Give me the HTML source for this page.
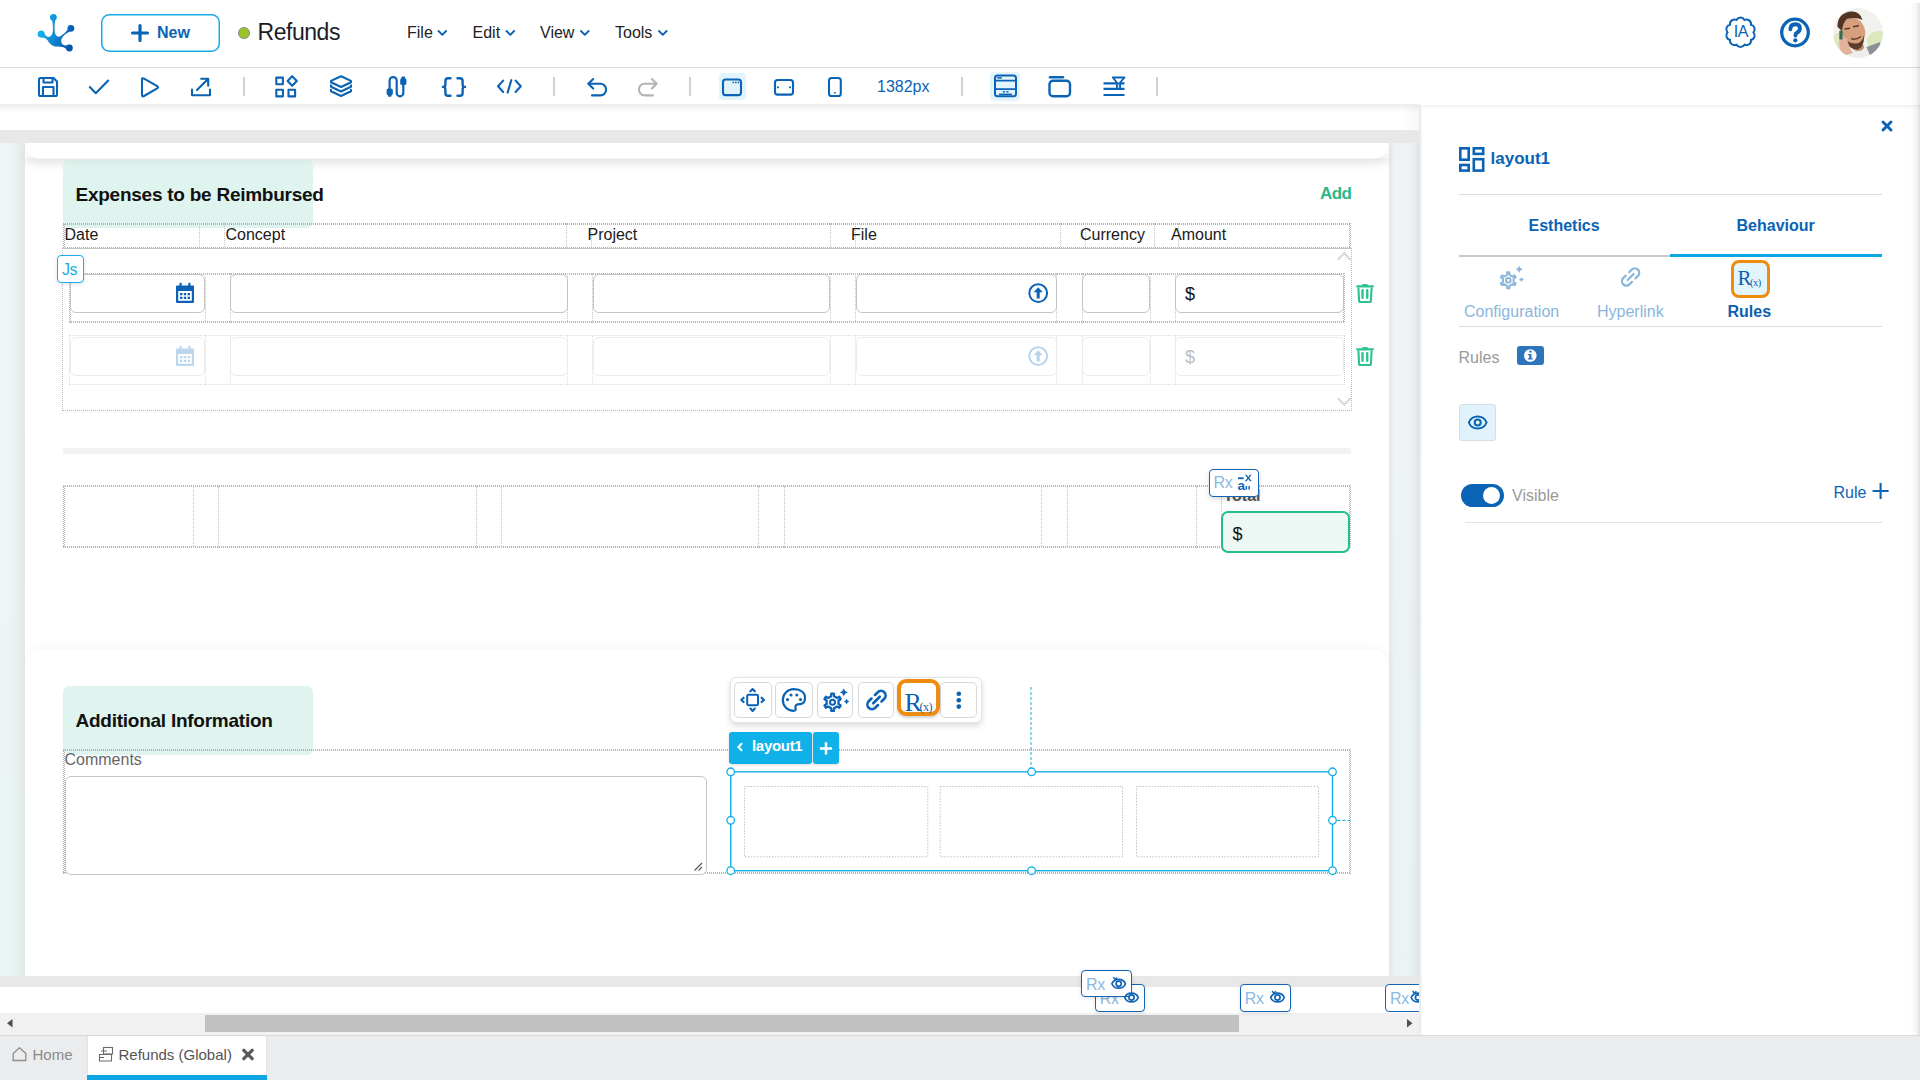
<!DOCTYPE html>
<html><head><meta charset="utf-8">
<style>
*{box-sizing:border-box;margin:0;padding:0}
html,body{width:1920px;height:1080px;overflow:hidden;background:#fff;font-family:"Liberation Sans",sans-serif;position:relative}
.a{position:absolute}
.t{position:absolute;line-height:1;white-space:nowrap}
svg{position:absolute;overflow:visible}
.blue{color:#0b63b5}
.dot{border:1px dotted #b9b9b9}
.dd{background:
 repeating-linear-gradient(90deg,#b4b4b4 0 1px,transparent 1px 2px) 0 0/100% 2px no-repeat,
 repeating-linear-gradient(90deg,#b4b4b4 0 1px,transparent 1px 2px) 0 100%/100% 2px no-repeat,
 repeating-linear-gradient(180deg,#b4b4b4 0 1px,transparent 1px 2px) 0 0/1px 100% no-repeat,
 repeating-linear-gradient(180deg,transparent 0 1px,#b4b4b4 1px 2px) 1px 0/1px 100% no-repeat,
 repeating-linear-gradient(180deg,#b4b4b4 0 1px,transparent 1px 2px) 100% 0/1px 100% no-repeat,
 repeating-linear-gradient(180deg,transparent 0 1px,#b4b4b4 1px 2px) calc(100% - 1px) 0/1px 100% no-repeat}

.inp{position:absolute;border:1px solid #c4c4c4;border-radius:6px;background:#fff}
.inp2{position:absolute;border:1px solid #ececec;border-radius:6px;background:#fff}
</style></head><body>

<!-- ================= HEADER ================= -->
<div class="a" style="left:0;top:67px;width:1920px;height:1px;background:#d9d9d9"></div>
<svg style="left:0;top:0" width="1920" height="67">
  <defs>
    <linearGradient id="lg" x1="39" y1="30" x2="72" y2="40" gradientUnits="userSpaceOnUse">
      <stop offset="0" stop-color="#18b4f0"/><stop offset="0.5" stop-color="#0a85d2"/><stop offset="1" stop-color="#0a52a6"/>
    </linearGradient>
  </defs>
  <g fill="url(#lg)">
    <circle cx="53.35" cy="17.3" r="3.4"/>
    <circle cx="41.1" cy="34" r="3.5"/>
    <circle cx="70.9" cy="28.3" r="3.4"/>
    <circle cx="69.4" cy="48" r="3.4"/>
    <path d="M51.9,19.5 C52.8,23 53.2,27 52.9,31 C52.6,34.5 50.8,36.9 48.3,36.9 C46.3,36.9 44.6,35 43.6,31.6 L41.5,37.4 C44.5,37.2 46.2,38.5 47.4,40.1 C49,42.6 51,45.6 55.2,46.6 C58,47.1 62,46.4 65,47.9 L67.4,50.2 L69.2,44.6 C66.5,45.9 64,45.8 62.3,44 C60.6,42 60.9,39 62.6,37 C64.2,35 66.6,33.3 69.8,31.6 L68.4,28.6 C66,32.2 63,34.8 60.5,36.2 C58.5,37.2 56.5,36.6 55.5,34.5 C54.6,32 54.3,28 54.6,25 C54.8,23 55.2,21.5 55.2,19.5 Z"/>
  </g>
  <!-- New button -->
  <rect x="101.75" y="14.75" width="117.5" height="36.5" rx="7.5" fill="#fff" stroke="#19a9e6" stroke-width="1.5"/>
  <path d="M140,25.5 V40.5 M132.5,33 H147.5" stroke="#0b63b5" stroke-width="3.2" stroke-linecap="round"/>
  <!-- status dot -->
  <circle cx="244" cy="33" r="5.6" fill="#9bc12d" stroke="#8a8a8a" stroke-width="0.9"/>
  <!-- chevrons -->
  <g stroke="#0b63b5" stroke-width="1.9" fill="none" stroke-linecap="round" stroke-linejoin="round">
    <path d="M438.5,31 L442.3,34.8 L446.1,31"/>
    <path d="M506.5,31 L510.3,34.8 L514.1,31"/>
    <path d="M581,31 L584.8,34.8 L588.6,31"/>
    <path d="M659,31 L662.8,34.8 L666.6,31"/>
  </g>
  <!-- IA icon -->
  <path d="M1744.5,19.9 A4.6,4.6 0 0 1 1751.0,24.7 A4.6,4.6 0 0 1 1753.5,32.3 A4.6,4.6 0 0 1 1751.0,39.9 A4.6,4.6 0 0 1 1744.5,44.7 A4.6,4.6 0 0 1 1736.5,44.7 A4.6,4.6 0 0 1 1730.0,39.9 A4.6,4.6 0 0 1 1727.5,32.3 A4.6,4.6 0 0 1 1730.0,24.7 A4.6,4.6 0 0 1 1736.5,19.9 A4.6,4.6 0 0 1 1744.5,19.9 Z" fill="none" stroke="#0b63b5" stroke-width="2"/>
  <!-- help icon -->
  <circle cx="1795" cy="32.5" r="13.3" fill="none" stroke="#0b63b5" stroke-width="3.3"/>
  <path d="M1790.4,29.3 Q1790.4,24.2 1795.3,24.2 Q1799.9,24.2 1799.9,28.4 Q1799.9,31 1797.2,32.5 Q1795.4,33.5 1795.4,35.6" fill="none" stroke="#0b63b5" stroke-width="3.9" stroke-linecap="round"/>
  <circle cx="1795.3" cy="40.3" r="2.1" fill="#0b63b5"/>
  <!-- avatar -->
  <defs><clipPath id="av"><circle cx="1858" cy="33" r="25"/></clipPath>
  <radialGradient id="avbg" cx="0.7" cy="0.6" r="0.7"><stop offset="0" stop-color="#d6e4b4"/><stop offset="1" stop-color="#eef0ec"/></radialGradient></defs>
  <filter id="avb" x="-10%" y="-10%" width="120%" height="120%"><feGaussianBlur stdDeviation="0.6"/></filter>
  <g clip-path="url(#av)"><g filter="url(#avb)">
    <rect x="1833" y="8" width="50" height="50" fill="#f1f2ee"/>
    <ellipse cx="1879" cy="41" rx="12" ry="10" fill="#dce8bb"/>
    <ellipse cx="1838" cy="44" rx="6" ry="11" fill="#dfe9c0"/>
    <path d="M1864,48 L1880,42 L1886,60 H1860 Z" fill="#8d9098"/>
    <path d="M1851,50 L1866,46 L1872,60 H1849 Z" fill="#eeedeb"/>
    <ellipse cx="1858" cy="47" rx="6" ry="4" fill="#c48b6c"/>
    <ellipse cx="1853.5" cy="31.5" rx="11.5" ry="14" fill="#d7a07d" transform="rotate(-18 1853.5 31.5)"/>
    <path d="M1837.5,27 Q1837,14 1850,11.5 Q1860,10.5 1862.5,20 Q1856,16.5 1847,19 Q1843,22 1842,31 Z" fill="#513524"/>
    <path d="M1845,39 Q1849,50 1857.5,49.5 Q1864.5,47.5 1864,35 Q1862,43.5 1856,43.5 Q1849.5,43.5 1845,39 Z" fill="#5b3e2c"/>
    <path d="M1844.5,29 L1850,28.2 M1853,26.8 L1859,25.8" stroke="#5a3b2a" stroke-width="1.4"/>
    <path d="M1851,38.5 Q1856,40.5 1861,36.5" stroke="#6e3f30" stroke-width="1.5" fill="none"/>
    <path d="M1839.5,38 Q1837.5,49 1844,56 L1852.5,53 Q1848.5,45 1846.5,38 Z" fill="#e2b39c"/>
    <rect x="1839.3" y="30.5" width="3.4" height="9" rx="1" fill="#3e6a56"/>
  </g></g>
</svg>
<div class="t" style="left:157px;top:25px;font-size:16px;font-weight:bold;color:#0b63b5">New</div>
<div class="t" style="left:257.5px;top:20.5px;font-size:23px;color:#1c1c28;letter-spacing:-0.45px">Refunds</div>
<div class="t" style="left:407px;top:25.2px;font-size:16px;color:#222">File</div>
<div class="t" style="left:472.5px;top:25.2px;font-size:16px;color:#222">Edit</div>
<div class="t" style="left:540px;top:25.2px;font-size:16px;color:#222">View</div>
<div class="t" style="left:615px;top:25.2px;font-size:16px;color:#222">Tools</div>
<div class="t" style="left:1733.8px;top:23.8px;font-size:16px;color:#0b63b5;letter-spacing:-0.6px">IA</div>

<!-- ================= TOOLBAR ================= -->
<div class="a" style="left:719px;top:73px;width:27px;height:27px;background:#e1f3fb;border-radius:4px"></div>
<div class="a" style="left:990px;top:72px;width:30px;height:29px;background:#e1f3fb;border-radius:4px"></div>
<svg style="left:0;top:0" width="1920" height="110">
 <g stroke="#0b63b5" stroke-width="2.1" fill="none" stroke-linecap="round" stroke-linejoin="round">
  <!-- save -->
  <path d="M40.5,78 H53.5 L57,81.5 V94.5 Q57,96 55.5,96 H40.5 Q39,96 39,94.5 V79.5 Q39,78 40.5,78 Z"/>
  <path d="M43.5,78.5 V82.5 H52.5 V78.5"/>
  <path d="M43,96 V87 H53.5 V96"/>
  <!-- check -->
  <path d="M89.8,87 L95.8,93.2 L108.2,80.6"/>
  <!-- play -->
  <path d="M142,79.5 Q142,77.5 144,78.6 L157.2,86.2 Q158.8,87.3 157.2,88.4 L144,96 Q142,97 142,95 Z"/>
  <!-- export -->
  <path d="M192,89.5 V95.3 H210 V89.5"/>
  <path d="M197,90 L207.5,79.5 M201.2,78.8 H208.2 V85.8"/>
  <!-- components -->
  <rect x="276.3" y="77.6" width="6.6" height="6.6"/>
  <rect x="276.3" y="89.8" width="6.6" height="6.6"/>
  <rect x="288.5" y="89.8" width="6.6" height="6.6"/>
  <path d="M292.2,76.2 L296.8,81 L292.2,85.8 L287.6,81 Z"/>
  <!-- layers -->
  <path d="M341,76.2 L351,80.9 V82.3 L341,87 L331,82.3 V80.9 Z"/>
  <path d="M331,85.4 V86.8 L341,91.5 L351,86.8 V85.4"/>
  <path d="M331,89.9 V91.3 L341,96 L351,91.3 V89.9"/>
  <!-- connector -->
  <path d="M389.6,89 V80.6 A3.55,3.55 0 0 1 396.7,80.6 V93 A3.3,3.3 0 0 0 403.3,93 V84" stroke-width="2.2"/>
  <!-- braces -->
  <path d="M450.5,78.3 H448 Q445.4,78.3 445.4,81 V84.4 Q445.4,86.9 443,86.9 Q445.4,86.9 445.4,89.4 V93.2 Q445.4,95.8 448,95.8 H450.5" stroke-width="2.4"/>
  <path d="M457.5,78.3 H460 Q462.6,78.3 462.6,81 V84.4 Q462.6,86.9 465,86.9 Q462.6,86.9 462.6,89.4 V93.2 Q462.6,95.8 460,95.8 H457.5" stroke-width="2.4"/>
  <!-- code -->
  <path d="M503.2,80.6 L498,86.3 L503.2,92"/>
  <path d="M515.6,80.6 L520.8,86.3 L515.6,92"/>
  <path d="M511.3,80.2 L507.6,92.6"/>
  <!-- undo -->
  <path d="M593.2,79 L588.3,83.8 L593.2,88.6"/>
  <path d="M589,83.8 H600.5 A5.6,5.8 0 0 1 600.5,95.4 H592"/>
  <!-- redo -->
  <path d="M651.8,79 L656.7,83.8 L651.8,88.6" stroke="#b4b4b4"/>
  <path d="M656,83.8 H644.5 A5.6,5.8 0 0 0 644.5,95.4 H653" stroke="#b4b4b4"/>
  <!-- desktop -->
  <rect x="723" y="79.5" width="18" height="15.6" rx="2.6" fill="#e1f3fb"/>
  <!-- tablet -->
  <rect x="775" y="80" width="18" height="14.6" rx="2.6"/>
  <!-- phone -->
  <rect x="829" y="78" width="11.8" height="18" rx="2.6"/>
  <!-- layout hf -->
  <rect x="995" y="75.5" width="21" height="20.8" rx="2.6" fill="#e1f3fb" stroke-width="2"/>
  <path d="M995.5,80.6 H1015.5 M995.5,89.2 H1015.5" stroke-width="1.8"/>
  <!-- card -->
  <path d="M1050,77.2 H1063" stroke-width="2.4"/>
  <rect x="1049.5" y="80.8" width="20.5" height="15.4" rx="3.4" stroke-width="2.4"/>
  <!-- filter lines -->
  <path d="M1103.5,83.4 H1124.5 M1103.5,88.9 H1124.5 M1103.5,95 H1124.5" stroke-width="2.1" stroke-linecap="butt"/>
  <path d="M1111,76.5 H1126 L1120.5,82.5 H1116.5 Z" fill="#fff" stroke="none"/><rect x="1117.6" y="84.6" width="1.8" height="3" fill="#a9c7e6" stroke="none"/>
  <path d="M1112.8,77.5 H1124.5 L1120.1,82.6 V88.5 M1116.9,82.6 V88.5 M1112.8,77.5 L1116.9,82.6" stroke-width="1.8"/>
 </g>
 <g fill="#0b63b5">
  <rect x="386.6" y="88.6" width="6.2" height="6.6" rx="1.6"/><rect x="387.9" y="93.5" width="3.6" height="3.3" rx="0.8"/>
  <rect x="400.2" y="78.3" width="6.2" height="6.6" rx="1.6"/><rect x="401.5" y="76.4" width="3.6" height="3.3" rx="0.8"/>
  <circle cx="733.3" cy="82.4" r="0.85"/><circle cx="735.8" cy="82.4" r="0.85"/><circle cx="738.3" cy="82.4" r="0.85"/>
  <circle cx="778" cy="87.3" r="1.1"/><circle cx="790" cy="87.3" r="1.1"/>
  <rect x="833.8" y="92.2" width="2.3" height="1.4" rx="0.6"/>
  <rect x="997.2" y="77.1" width="4.6" height="1.5"/>
  <rect x="1002.8" y="91.1" width="2.2" height="1.4"/><rect x="1006.3" y="91.1" width="2.2" height="1.4"/>
  <rect x="999" y="93.6" width="13" height="1.5"/>
 </g>
 <g fill="#c9c9c9">
  <rect x="243.2" y="77" width="1.6" height="19"/>
  <rect x="553.2" y="77" width="1.6" height="19"/>
  <rect x="689.2" y="77" width="1.6" height="19"/>
  <rect x="961.2" y="77" width="1.6" height="19"/>
  <rect x="1156.2" y="77" width="1.6" height="19"/>
 </g>
</svg>
<div class="t" style="left:877px;top:78.8px;font-size:16px;color:#0b63b5">1382px</div>
<div class="a" style="left:0;top:104px;width:1420px;height:9px;background:linear-gradient(#ececec,#f6f6f6 40%,rgba(255,255,255,0))"></div>

<!-- ================= CANVAS ================= -->
<div class="a" style="left:0;top:130px;width:1420px;height:13px;background:#e8e8e8"></div>
<div class="a" style="left:0;top:143px;width:1420px;height:833px;background:linear-gradient(90deg,#f0f6f6 0,#edf4f4 12px,#e3e8e9 25px)"></div>
<div class="a" style="left:1389px;top:143px;width:30px;height:833px;background:linear-gradient(90deg,#e3e7e9 0,#eef2f4 5px,#f0f4f5 18px,#e9edef 25px,#dde1e3 30px)"></div>
<div class="a" style="left:0;top:143px;width:1419px;height:833px;background:linear-gradient(180deg,rgba(200,235,225,0) 30%,rgba(215,245,235,0.2) 100%)"></div>
<div class="a" style="left:1418.5px;top:105px;width:2.5px;height:930px;background:#ececec"></div>
<div class="a" style="left:1419px;top:104.5px;width:501px;height:1.5px;background:#dfe2e2"></div>
<div class="a" style="left:1400px;top:105px;width:19px;height:25px;background:linear-gradient(90deg,rgba(0,0,0,0),rgba(0,0,0,0.03))"></div>
<div class="a" style="left:25px;top:143px;width:1364px;height:833px;background:#fff"></div>
<div class="a" style="left:25px;top:143px;width:1364px;height:15.5px;background:#fff;border-radius:0 0 18px 18px;box-shadow:0 6px 12px rgba(0,0,0,0.07)"></div>
<div class="a" style="left:25px;top:648.8px;width:1364px;height:327.2px;background:#fff;border-radius:18px 18px 0 0;box-shadow:0 -3px 8px rgba(0,0,0,0.03)"></div>

<!-- card1 content -->
<div class="a" style="left:63px;top:160px;width:250px;height:68px;background:#dff4ee;border-radius:6px"></div>
<div class="a" style="left:25px;top:158px;width:1364px;height:9px;background:linear-gradient(rgba(0,0,0,0.045),rgba(0,0,0,0))"></div>
<div class="t" style="left:75.5px;top:184.6px;font-size:19px;font-weight:bold;color:#111;letter-spacing:-0.25px">Expenses to be Reimbursed</div>
<div class="t" style="left:1320px;top:185.3px;font-size:17px;font-weight:bold;color:#2bb88a;letter-spacing:-0.6px">Add</div>
<!-- table header -->
<div class="a dd" style="left:63px;top:223px;width:1288px;height:26px"></div>
<div class="a" style="left:63px;top:247.5px;width:1288px;height:1px;background:#c4c4c4"></div>
<div class="a" style="left:199px;top:223px;width:26px;height:24px;border-left:1px dotted #c2c2c2;border-right:1px dotted #c2c2c2"></div>
<div class="a" style="left:566px;top:223px;width:26px;height:24px;border-left:1px dotted #c2c2c2;border-right:1px dotted #c2c2c2"></div>
<div class="a" style="left:830px;top:223px;width:26px;height:24px;border-left:1px dotted #c2c2c2;border-right:1px dotted #c2c2c2"></div>
<div class="a" style="left:1060px;top:223px;width:26px;height:24px;border-left:1px dotted #c2c2c2;border-right:1px dotted #c2c2c2"></div>
<div class="a" style="left:1153.5px;top:223px;width:25.5px;height:24px;border-left:1px dotted #c2c2c2;border-right:1px dotted #c2c2c2"></div>
<div class="t" style="left:64.5px;top:226.7px;font-size:16px;color:#1a1a1a">Date</div>
<div class="t" style="left:225.5px;top:226.7px;font-size:16px;color:#1a1a1a">Concept</div>
<div class="t" style="left:587.5px;top:226.7px;font-size:16px;color:#1a1a1a">Project</div>
<div class="t" style="left:851px;top:226.7px;font-size:16px;color:#1a1a1a">File</div>
<div class="t" style="left:1080px;top:226.7px;font-size:16px;color:#1a1a1a">Currency</div>
<div class="t" style="left:1171px;top:226.7px;font-size:16px;color:#1a1a1a">Amount</div>
<!-- table body -->
<div class="a dot" style="left:62px;top:248px;width:1290px;height:163px;border-top:none"></div>
<!-- row 1 -->
<div class="a dd" style="left:69px;top:273px;width:1276px;height:50px"></div>
<div class="a" style="left:204.5px;top:273px;width:26px;height:49.5px;border-left:1px dotted #c4c4c4;border-right:1px dotted #c4c4c4"></div>
<div class="a" style="left:567px;top:273px;width:26px;height:49.5px;border-left:1px dotted #c4c4c4;border-right:1px dotted #c4c4c4"></div>
<div class="a" style="left:830px;top:273px;width:26px;height:49.5px;border-left:1px dotted #c4c4c4;border-right:1px dotted #c4c4c4"></div>
<div class="a" style="left:1056px;top:273px;width:26.5px;height:49.5px;border-left:1px dotted #c4c4c4;border-right:1px dotted #c4c4c4"></div>
<div class="a" style="left:1149.5px;top:273px;width:26px;height:49.5px;border-left:1px dotted #c4c4c4;border-right:1px dotted #c4c4c4"></div>
<div class="inp" style="left:70px;top:274.3px;width:135px;height:38.5px"></div>
<div class="inp" style="left:230px;top:274.3px;width:337.5px;height:38.5px"></div>
<div class="inp" style="left:593px;top:274.3px;width:237px;height:38.5px"></div>
<div class="inp" style="left:855.5px;top:274.3px;width:201.5px;height:38.5px"></div>
<div class="inp" style="left:1082px;top:274.3px;width:67.7px;height:38.5px"></div>
<div class="inp" style="left:1175px;top:274.3px;width:168.5px;height:38.5px"></div>
<div class="t" style="left:1185px;top:285px;font-size:18px;color:#111">$</div>
<!-- row 2 -->
<div class="a dot" style="left:69px;top:335px;width:1276px;height:49.5px;border-color:#dcdcdc"></div>
<div class="a" style="left:204.5px;top:335px;width:26px;height:49.5px;border-left:1px dotted #dedede;border-right:1px dotted #dedede"></div>
<div class="a" style="left:567px;top:335px;width:26px;height:49.5px;border-left:1px dotted #dedede;border-right:1px dotted #dedede"></div>
<div class="a" style="left:830px;top:335px;width:26px;height:49.5px;border-left:1px dotted #dedede;border-right:1px dotted #dedede"></div>
<div class="a" style="left:1056px;top:335px;width:26.5px;height:49.5px;border-left:1px dotted #dedede;border-right:1px dotted #dedede"></div>
<div class="a" style="left:1149.5px;top:335px;width:26px;height:49.5px;border-left:1px dotted #dedede;border-right:1px dotted #dedede"></div>
<div class="inp2" style="left:70px;top:336.6px;width:135px;height:39px"></div>
<div class="inp2" style="left:230px;top:336.6px;width:337.5px;height:39px"></div>
<div class="inp2" style="left:593px;top:336.6px;width:237px;height:39px"></div>
<div class="inp2" style="left:855.5px;top:336.6px;width:201.5px;height:39px"></div>
<div class="inp2" style="left:1082px;top:336.6px;width:67.7px;height:39px"></div>
<div class="inp2" style="left:1175px;top:336.6px;width:168.5px;height:39px"></div>
<div class="t" style="left:1185px;top:347.5px;font-size:18px;color:#bdbdbd">$</div>
<!-- Js badge -->
<div class="a" style="left:57px;top:255px;width:26.5px;height:27.5px;border:1.5px solid #19aee8;border-radius:4px;background:#fff;box-shadow:0 1px 4px rgba(0,0,0,0.12)"></div>
<div class="t" style="left:62px;top:262px;font-size:16px;color:#1aa9e4;letter-spacing:-0.5px">Js</div>
<svg style="left:0;top:0" width="1420" height="600">
 <!-- calendar icons -->
 <g fill="#0b63b5">
  <path d="M177,285.5 H193 Q194,285.5 194,286.5 V302 Q194,303 193,303 H177 Q176,303 176,302 V286.5 Q176,285.5 177,285.5 Z M178.2,291 V300.8 H191.8 V291 Z"/>
  <rect x="179.5" y="282.8" width="2.2" height="4.5"/><rect x="188.3" y="282.8" width="2.2" height="4.5"/>
  <rect x="180" y="293" width="2.4" height="2.3"/><rect x="183.8" y="293" width="2.4" height="2.3"/><rect x="187.6" y="293" width="2.4" height="2.3"/>
  <rect x="180" y="296.7" width="2.4" height="2.3"/><rect x="183.8" y="296.7" width="2.4" height="2.3"/><rect x="187.6" y="296.7" width="2.4" height="2.3"/>
 </g>
 <g fill="#bcd6ee">
  <path d="M177,348.5 H193 Q194,348.5 194,349.5 V365 Q194,366 193,366 H177 Q176,366 176,365 V349.5 Q176,348.5 177,348.5 Z M178.2,354 V363.8 H191.8 V354 Z"/>
  <rect x="179.5" y="345.8" width="2.2" height="4.5"/><rect x="188.3" y="345.8" width="2.2" height="4.5"/>
  <rect x="180" y="356" width="2.4" height="2.3"/><rect x="183.8" y="356" width="2.4" height="2.3"/><rect x="187.6" y="356" width="2.4" height="2.3"/>
  <rect x="180" y="359.7" width="2.4" height="2.3"/><rect x="183.8" y="359.7" width="2.4" height="2.3"/><rect x="187.6" y="359.7" width="2.4" height="2.3"/>
 </g>
 <!-- upload icons -->
 <g fill="none" stroke="#0b63b5" stroke-width="2">
  <circle cx="1038.2" cy="293.1" r="8.9"/>
 </g>
 <path d="M1038.2,287.3 L1042.8,292.2 H1039.7 V298.5 H1036.7 V292.2 H1033.6 Z" fill="#0b63b5"/>
 <g fill="none" stroke="#b8d3ec" stroke-width="2">
  <circle cx="1038.2" cy="356.1" r="8.9"/>
 </g>
 <path d="M1038.2,350.3 L1042.8,355.2 H1039.7 V361.5 H1036.7 V355.2 H1033.6 Z" fill="#b8d3ec"/>
 <!-- trash icons -->
 <g fill="#2cc38c">
  <path d="M1356,285.2 H1362 L1362.8,284 H1367.2 L1368,285.2 H1374 L1373.4,287.6 H1356.6 Z"/>
  <path d="M1358.4,287.5 L1359.1,301.3 Q1359.2,302 1360,302 H1370 Q1370.8,302 1370.9,301.3 L1371.6,287.5" fill="none" stroke="#2cc38c" stroke-width="2.1"/>
  <rect x="1361.3" y="288.9" width="2.4" height="10" rx="1.2"/><rect x="1366" y="288.9" width="2.4" height="10" rx="1.2"/>
  <path d="M1356,348.2 H1362 L1362.8,347 H1367.2 L1368,348.2 H1374 L1373.4,350.6 H1356.6 Z"/>
  <path d="M1358.4,350.5 L1359.1,364.3 Q1359.2,365 1360,365 H1370 Q1370.8,365 1370.9,364.3 L1371.6,350.5" fill="none" stroke="#2cc38c" stroke-width="2.1"/>
  <rect x="1361.3" y="351.9" width="2.4" height="10" rx="1.2"/><rect x="1366" y="351.9" width="2.4" height="10" rx="1.2"/>
 </g>
 <!-- scroll chevrons -->
 <g fill="none" stroke="#d9d9d9" stroke-width="2.3">
  <path d="M1337.8,259.8 L1344.2,253.3 L1350.6,259.8"/>
  <path d="M1337.8,398.2 L1344.2,404.7 L1350.6,398.2"/>
 </g>
</svg>

<!-- card1 section 2 : totals -->
<div class="a" style="left:63px;top:448px;width:1288px;height:6px;background:#f1f3f3"></div>
<div class="a dd" style="left:63px;top:485px;width:1288px;height:63px"></div>
<div class="a" style="left:192.5px;top:485.5px;width:26px;height:62px;border-left:1px dotted #c2c2c2;border-right:1px dotted #c2c2c2"></div>
<div class="a" style="left:475.5px;top:485.5px;width:26px;height:62px;border-left:1px dotted #c2c2c2;border-right:1px dotted #c2c2c2"></div>
<div class="a" style="left:758px;top:485.5px;width:26.5px;height:62px;border-left:1px dotted #c2c2c2;border-right:1px dotted #c2c2c2"></div>
<div class="a" style="left:1041px;top:485.5px;width:26.5px;height:62px;border-left:1px dotted #c2c2c2;border-right:1px dotted #c2c2c2"></div>
<div class="a" style="left:1196px;top:485.5px;width:25.5px;height:62px;border-left:1px dotted #c2c2c2;border-right:1px dotted #c2c2c2"></div>
<div class="t" style="left:1223.5px;top:487.5px;font-size:16px;font-weight:bold;color:#555">Total</div>
<div class="a" style="left:1221.3px;top:511.4px;width:128.7px;height:41.2px;border:2.3px solid #25c08a;border-radius:7px;background:#edf8f5"></div>
<div class="t" style="left:1232.5px;top:524.5px;font-size:18px;color:#111">$</div>
<div class="a" style="left:1209.3px;top:469.3px;width:49.5px;height:27.3px;border:1.8px solid #1464b4;border-radius:4px;background:#fff;box-shadow:0 2px 5px rgba(0,0,0,0.15)"></div>
<div class="t" style="left:1213.5px;top:474.6px;font-size:16px;color:#8cb8e0;letter-spacing:-0.3px">Rx</div>
<svg style="left:0;top:0" width="1420" height="600">
 <g fill="#1464b4">
  <rect x="1238" y="477.3" width="5.6" height="1.9"/>
  <path d="M1245,474.8 L1246.8,474.8 L1248.3,476.9 L1249.8,474.8 L1251.6,474.8 L1249.2,478 L1251.8,481.2 L1250,481.2 L1248.3,479 L1246.6,481.2 L1244.8,481.2 L1247.4,478 Z"/>
  <rect x="1245.6" y="486" width="1.5" height="3.6"/><rect x="1248.4" y="486" width="1.5" height="3.6"/>
 </g>
</svg>
<div class="t" style="left:1237.5px;top:478.8px;font-size:13.5px;font-weight:bold;color:#1464b4">a</div>

<!-- card 2 -->
<div class="a" style="left:63px;top:686px;width:249.5px;height:68.5px;background:#dff4ee;border-radius:6px"></div>
<div class="t" style="left:75.5px;top:711.4px;font-size:19px;font-weight:bold;color:#111;letter-spacing:-0.25px">Additional Information</div>
<div class="a dd" style="left:63px;top:749px;width:1288px;height:125px"></div>
<div class="t" style="left:64.5px;top:752px;font-size:16px;color:#666">Comments</div>
<div class="a" style="left:64.5px;top:775.5px;width:642.5px;height:99px;border:1.3px solid #c6c6c6;border-radius:6px;background:#fff"></div>
<svg style="left:0;top:0" width="1420" height="1080">
 <path d="M694.5,870.5 L702,863 M698.5,870.5 L702,867" stroke="#555" stroke-width="1.1"/>
 <!-- selection -->
 <path d="M1031,687 V771" stroke="#12aee8" stroke-width="1" stroke-dasharray="3,2"/>
 <path d="M1332.5,820.5 H1351" stroke="#12aee8" stroke-width="1" stroke-dasharray="3,2"/>
 <rect x="730.7" y="771.8" width="601.8" height="98.9" fill="none" stroke="#12aee8" stroke-width="1.4"/>
 <g fill="#fff" stroke="#12aee8" stroke-width="1.3">
  <circle cx="730.7" cy="771.8" r="3.8"/><circle cx="1031.6" cy="771.8" r="3.8"/><circle cx="1332.5" cy="771.8" r="3.8"/>
  <circle cx="730.7" cy="820.3" r="3.8"/><circle cx="1332.5" cy="820.3" r="3.8"/>
  <circle cx="730.7" cy="870.7" r="3.8"/><circle cx="1031.6" cy="870.7" r="3.8"/><circle cx="1332.5" cy="870.7" r="3.8"/>
 </g>
 <g fill="none" stroke="#c4c4c4" stroke-width="1" stroke-dasharray="1.5,1.5">
  <rect x="744.5" y="786.5" width="183.3" height="70.3"/>
  <rect x="940.2" y="786.5" width="182.3" height="70.3"/>
  <rect x="1136.5" y="786.5" width="182.1" height="70.3"/>
 </g>
</svg>
<!-- component toolbar -->
<div class="a" style="left:729.7px;top:676.7px;width:252.6px;height:46px;background:#fff;border:1px solid #e2e4e6;border-radius:6px;box-shadow:0 3px 6px rgba(0,0,0,0.14)"></div>
<div class="a" style="left:734.2px;top:682.2px;width:37.5px;height:36px;border:1px solid #d6d8da;border-radius:5px"></div>
<div class="a" style="left:775.4px;top:682.2px;width:37.3px;height:36px;border:1px solid #d6d8da;border-radius:5px"></div>
<div class="a" style="left:817px;top:682.2px;width:36.4px;height:36px;border:1px solid #d6d8da;border-radius:5px"></div>
<div class="a" style="left:858.4px;top:682.2px;width:36.1px;height:36px;border:1px solid #d6d8da;border-radius:5px"></div>
<div class="a" style="left:940.3px;top:682.2px;width:37.2px;height:36px;border:1px solid #d6d8da;border-radius:5px"></div>
<div class="a" style="left:897.2px;top:679.4px;width:42.4px;height:36.8px;border:4.3px solid #ef8c0f;border-radius:9px;background:#fff;box-shadow:0 2px 3px rgba(0,0,0,0.18)"></div>
<div class="t" style="left:904.5px;top:689.5px;font-size:26px;font-family:'Liberation Serif',serif;color:#0b5fae;letter-spacing:-2.4px">R<span style="font-size:12px;position:relative;top:0.5px;letter-spacing:-0.5px">(x)</span></div>
<svg style="left:0;top:0" width="1420" height="1080">
 <g fill="none" stroke="#0b63b5" stroke-width="2">
  <rect x="747.2" y="694.7" width="10.8" height="10.6" rx="1.4"/>
  <path d="M750.4,691.3 L752.6,689 L754.8,691.3 M750.4,708.6 L752.6,710.9 L754.8,708.6 M743.6,697.7 L741.3,699.9 L743.6,702.1 M761.6,697.7 L763.9,699.9 L761.6,702.1" stroke-width="2.1" stroke-linecap="round" stroke-linejoin="round"/>
  <circle cx="794.2" cy="700" r="0" />
  <path d="M805,698.3 C805.3,692.3 800.5,689.2 794,689.2 C787.2,689.2 782.8,694.2 782.8,700.1 C782.8,706.3 787.8,710.9 793.6,710.9 C795.2,710.9 796.1,709.8 795.6,708.3 C795.1,706.8 795.4,704.6 797.6,704.3 L800.2,704.1 C803.2,703.9 804.9,701.6 805,698.3 Z" stroke-width="2.2"/>
  
  
  <path d="M886.5,699.8 L882.2,704.1 Q879.2,707.1 876.2,704.1" stroke-width="0" />
 </g>
 <g fill="none" stroke="#0b63b5" stroke-width="2.6" stroke-linecap="round" transform="translate(876.5,700) rotate(-45)">
  <path d="M-2.5,-4.6 H-6.4 A4.6,4.6 0 0 0 -6.4,4.6 H-2.5"/>
  <path d="M2.5,-4.6 H6.4 A4.6,4.6 0 0 1 6.4,4.6 H2.5"/>
  <path d="M-4.6,0 H4.6"/>
 </g>
 <g fill="#0b63b5">
  
  <circle cx="787.5" cy="699.6" r="1.55"/><circle cx="791" cy="695" r="1.55"/><circle cx="796.8" cy="695" r="1.55"/><circle cx="800.5" cy="699.6" r="1.55"/>
  <circle cx="958.8" cy="693.8" r="2.3"/><circle cx="958.8" cy="700.2" r="2.3"/><circle cx="958.8" cy="706.6" r="2.3"/>
  
 </g>
 <path fill="none" stroke="#0b63b5" stroke-width="2.3" stroke-linejoin="round" d="M831.18,696.26 L831.24,693.71 L833.96,693.71 L834.02,696.26 L837.12,698.06 L839.36,696.82 L840.72,699.18 L838.54,700.51 L838.54,704.09 L840.72,705.42 L839.36,707.78 L837.12,706.54 L834.02,708.34 L833.96,710.89 L831.24,710.89 L831.18,708.34 L828.08,706.54 L825.84,707.78 L824.48,705.42 L826.66,704.09 L826.66,700.51 L824.48,699.18 L825.84,696.82 L828.08,698.06 Z"/><circle cx="832.5" cy="702.3" r="2.5" fill="none" stroke="#0b63b5" stroke-width="2"/>
 <path d="M843.80,688.40 L845.15,690.95 L847.70,692.30 L845.15,693.65 L843.80,696.20 L842.45,693.65 L839.90,692.30 L842.45,690.95 Z" fill="#0b63b5"/>
 <path d="M846.60,698.80 L847.60,700.60 L849.40,701.60 L847.60,702.60 L846.60,704.40 L845.60,702.60 L843.80,701.60 L845.60,700.60 Z" fill="#0b63b5"/>
</svg>
<div class="a" style="left:729.3px;top:732.2px;width:82.3px;height:31.4px;background:#10b0e8;border-radius:3px;box-shadow:0 1px 3px rgba(0,0,0,0.15)"></div>
<div class="a" style="left:813.3px;top:732.2px;width:25.6px;height:31.4px;background:#10b0e8;border-radius:3px;box-shadow:0 1px 3px rgba(0,0,0,0.15)"></div>
<svg style="left:0;top:0" width="1420" height="1080">
 <path d="M741.5,743.8 L738.4,747 L741.5,750.2" fill="none" stroke="#fff" stroke-width="2" stroke-linecap="round"/>
 <path d="M826,742.3 V754.5 M819.9,748.4 H832.1" stroke="#fff" stroke-width="2.5"/>
</svg>
<div class="t" style="left:752px;top:738px;font-size:15px;font-weight:bold;color:#fff;letter-spacing:-0.3px">layout1</div>

<!-- bottom scroll area -->
<div class="a" style="left:0;top:976px;width:1420px;height:11px;background:#e8e8e8"></div>
<div class="a" style="left:0;top:1013px;width:1420px;height:22px;background:#f1f1f1"></div>
<div class="a" style="left:205px;top:1015px;width:1034px;height:17px;background:#c1c1c1"></div>
<svg style="left:0;top:0" width="1420" height="1080">
 <path d="M7,1023.3 L12.5,1019 V1027.6 Z" fill="#505050"/>
 <path d="M1412.5,1023.3 L1407,1019 V1027.6 Z" fill="#505050"/>
</svg>
<!-- bottom Rx badges -->
<div class="a" style="left:1095.2px;top:984px;width:50.3px;height:27.5px;border:1.6px solid #1464b4;border-radius:4px;background:#fff;box-shadow:0 1px 4px rgba(0,0,0,0.12)"></div>
<div class="t" style="left:1099.8px;top:990.6px;font-size:16px;color:#8cb8e0;letter-spacing:-0.3px">Rx</div>
<div class="a" style="left:1081.4px;top:970.2px;width:50.4px;height:27.2px;border:1.6px solid #1464b4;border-radius:4px;background:#fff;box-shadow:0 1px 4px rgba(0,0,0,0.12)"></div>
<div class="t" style="left:1086px;top:976.8px;font-size:16px;color:#8cb8e0;letter-spacing:-0.3px">Rx</div>
<div class="a" style="left:1240.2px;top:984px;width:50.4px;height:27.5px;border:1.6px solid #1464b4;border-radius:4px;background:#fff;box-shadow:0 1px 4px rgba(0,0,0,0.12)"></div>
<div class="t" style="left:1244.8px;top:990.6px;font-size:16px;color:#8cb8e0;letter-spacing:-0.3px">Rx</div>
<div class="a" style="left:0;top:960px;width:1420px;height:75px;overflow:hidden">
 <div class="a" style="left:1385.3px;top:24px;width:50.4px;height:27.5px;border:1.6px solid #1464b4;border-radius:4px;background:#fff"></div>
 <div class="t" style="left:1389.9px;top:30.6px;font-size:16px;color:#8cb8e0;letter-spacing:-0.3px">Rx</div>
 <svg style="left:0;top:0" width="1420" height="75">
  <g fill="none" stroke="#1464b4" stroke-width="1.7">
   <g transform="translate(1410,24)"><path d="M1.2,13.5 C3.5,7.6 12.5,7.6 14.8,13.5 C12.5,19.4 3.5,19.4 1.2,13.5 Z"/><circle cx="8" cy="13.5" r="2.6"/><path d="M2.6,7 L4.4,9.3 L6.4,7.2" stroke-width="1.4"/></g>
  </g>
 </svg>
</div>
<svg style="left:0;top:0" width="1420" height="1080">
 <g fill="none" stroke="#1464b4" stroke-width="1.7">
  <g transform="translate(1123.5,984)"><path d="M1.2,13.5 C3.5,7.6 12.5,7.6 14.8,13.5 C12.5,19.4 3.5,19.4 1.2,13.5 Z"/><circle cx="8" cy="13.5" r="2.6"/></g>
  <g transform="translate(1110.7,970.2)"><path d="M1.2,13.5 C3.5,7.6 12.5,7.6 14.8,13.5 C12.5,19.4 3.5,19.4 1.2,13.5 Z"/><circle cx="8" cy="13.5" r="2.6"/><path d="M2.6,7 L4.4,9.3 L6.4,7.2" stroke-width="1.4"/></g>
  <g transform="translate(1269.5,984)"><path d="M1.2,13.5 C3.5,7.6 12.5,7.6 14.8,13.5 C12.5,19.4 3.5,19.4 1.2,13.5 Z"/><circle cx="8" cy="13.5" r="2.6"/><path d="M2.6,7 L4.4,9.3 L6.4,7.2" stroke-width="1.4"/></g>
 </g>
</svg>

<!-- ================= RIGHT PANEL ================= -->
<div class="a" style="left:1419px;top:105px;width:501px;height:930px;background:#fff;border-left:2px solid #e9ecec;box-shadow:inset 0 2px 3px rgba(0,0,0,0.06)"></div>
<div class="a" style="left:1910px;top:3px;width:10px;height:1032px;background:linear-gradient(90deg,rgba(0,0,0,0),rgba(0,0,0,0.035) 60%,rgba(0,0,0,0.11))"></div>

<div class="a" style="left:1459px;top:194px;width:423px;height:1px;background:#dcdcdc"></div>
<div class="a" style="left:1459px;top:255px;width:211px;height:1.5px;background:#c9c9c9"></div>
<div class="a" style="left:1670px;top:254px;width:212px;height:3px;background:#0aa9e6"></div>
<div class="a" style="left:1459px;top:326px;width:423px;height:1px;background:#dcdcdc"></div>
<div class="a" style="left:1465px;top:522px;width:417px;height:1px;background:#dfe1e6"></div>
<div class="a" style="left:1731px;top:259.5px;width:39px;height:38.5px;border:3.2px solid #ef8c0f;border-radius:8px;background:#e2f4fc"></div>
<div class="a" style="left:1517px;top:346.3px;width:26.7px;height:18.4px;background:#2e74bb;border-radius:3px"></div>
<div class="a" style="left:1459px;top:404.3px;width:36.8px;height:37px;background:#e2f2fb;border:1px solid #d6dee4;border-radius:3px"></div>
<div class="a" style="left:1461px;top:483.8px;width:43px;height:23px;background:#0a63b5;border-radius:12px"></div>
<div class="a" style="left:1483px;top:486.8px;width:17px;height:17px;background:#fff;border-radius:50%"></div>
<svg style="left:0;top:0" width="1920" height="600">
 <g stroke="#0b63b5" fill="none">
  <path d="M1883,122 L1891,130 M1891,122 L1883,130" stroke-width="2.9" stroke-linecap="round"/>
  <g stroke-width="2.6">
   <rect x="1460.3" y="148.3" width="8.4" height="11.4"/>
   <rect x="1473.8" y="148.3" width="9.4" height="5.6"/>
   <rect x="1460.3" y="165" width="8.4" height="5.6"/>
   <rect x="1473.8" y="159.2" width="9.4" height="11.4"/>
  </g>
  <path d="M1872.6,491 H1888.6 M1880.6,483 V499" stroke-width="2.1"/>
  <!-- eye -->
  <path d="M1468.8,422.5 C1472,414.5 1483.4,414.5 1486.6,422.5 C1483.4,430.5 1472,430.5 1468.8,422.5 Z" stroke-width="2"/>
  <circle cx="1477.7" cy="422.5" r="3" stroke-width="2.1"/>
 </g>
 <!-- info i -->
 <circle cx="1530.3" cy="355.5" r="6.3" fill="#fff"/>
 <rect x="1529.2" y="354" width="2.3" height="5" fill="#2e74bb"/><rect x="1527.8" y="354" width="2" height="1.2" fill="#2e74bb"/><rect x="1527.8" y="358.3" width="5" height="1.2" fill="#2e74bb"/>
 <circle cx="1530.4" cy="351.6" r="1.2" fill="#2e74bb"/>
 <!-- config gear light -->
 <path fill="none" stroke="#8ab5dd" stroke-width="2" stroke-linejoin="round" d="M1507.14,274.82 L1507.21,272.37 L1509.39,272.37 L1509.46,274.82 L1512.46,276.55 L1514.62,275.40 L1515.71,277.28 L1513.63,278.57 L1513.63,282.03 L1515.71,283.32 L1514.62,285.20 L1512.46,284.05 L1509.46,285.78 L1509.39,288.23 L1507.21,288.23 L1507.14,285.78 L1504.14,284.05 L1501.98,285.20 L1500.89,283.32 L1502.97,282.03 L1502.97,278.57 L1500.89,277.28 L1501.98,275.40 L1504.14,276.55 Z"/><circle cx="1508.3" cy="280.3" r="2.3" fill="none" stroke="#8ab5dd" stroke-width="1.9"/>
 <path fill="#8ab5dd" d="M1519.20,265.70 L1520.40,268.10 L1522.80,269.30 L1520.40,270.50 L1519.20,272.90 L1518.00,270.50 L1515.60,269.30 L1518.00,268.10 Z"/>
 <path fill="#8ab5dd" d="M1521.50,276.90 L1522.40,278.60 L1524.10,279.50 L1522.40,280.40 L1521.50,282.10 L1520.60,280.40 L1518.90,279.50 L1520.60,278.60 Z"/>
 <!-- link light -->
 <g fill="none" stroke="#8ab5dd" stroke-width="2.2" stroke-linecap="round" transform="translate(1630.6,277) rotate(-45)">
  <path d="M-2.4,-4.4 H-6 A4.4,4.4 0 0 0 -6,4.4 H-2.4"/>
  <path d="M2.4,-4.4 H6 A4.4,4.4 0 0 1 6,4.4 H2.4"/>
  <path d="M-4.2,0 H4.2"/>
 </g>
</svg>
<div class="t" style="left:1737.5px;top:268px;font-size:21px;font-family:'Liberation Serif',serif;color:#0b5fae;letter-spacing:-1.6px">R<span style="font-size:10.5px;position:relative;top:0.5px;letter-spacing:-0.4px">(x)</span></div>
<div class="t" style="left:1490.5px;top:150px;font-size:17px;font-weight:bold;color:#0b63b5">layout1</div>
<div class="t" style="left:1528.5px;top:217.6px;font-size:16px;font-weight:bold;color:#0b63b5">Esthetics</div>
<div class="t" style="left:1736.5px;top:217.6px;font-size:16px;font-weight:bold;color:#0b63b5">Behaviour</div>
<div class="t" style="left:1464px;top:303.5px;font-size:16px;color:#8ab5dd">Configuration</div>
<div class="t" style="left:1597px;top:303.5px;font-size:16px;color:#8ab5dd">Hyperlink</div>
<div class="t" style="left:1727.5px;top:303.5px;font-size:16px;font-weight:bold;color:#0b5fae">Rules</div>
<div class="t" style="left:1458.5px;top:349.5px;font-size:16px;color:#9a9a9a">Rules</div>
<div class="t" style="left:1512px;top:487.8px;font-size:16px;color:#9a9a9a">Visible</div>
<div class="t" style="left:1833.5px;top:484.7px;font-size:16px;color:#0b63b5">Rule</div>

<!-- ================= TAB BAR ================= -->
<div class="a" style="left:0;top:1035px;width:1920px;height:45px;background:#ebecee;border-top:1px solid #dadada"></div>
<div class="a" style="left:87px;top:1036px;width:180px;height:44px;background:#fff;border-left:1px solid #e2e2e2;border-right:1px solid #e2e2e2"></div>
<div class="a" style="left:87px;top:1075px;width:180px;height:5px;background:#0ea5e3"></div>
<svg style="left:0;top:0" width="400" height="1080">
 <path d="M13.2,1053.5 L19.5,1047.8 L25.8,1053.5 V1060.5 H13.2 Z" fill="none" stroke="#8c8c8c" stroke-width="1.3" stroke-linejoin="round"/>
 <g fill="none" stroke="#6a6a6a" stroke-width="1.1">
  <rect x="103.5" y="1047.5" width="9" height="6.5"/>
  <path d="M101,1051 H107 M99.5,1054.5 H111.5 V1061 H99.5 Z M99.5,1057.5 H104"/>
 </g>
 <path d="M243.8,1050.3 L252.2,1058.7 M252.2,1050.3 L243.8,1058.7" stroke="#5a5a5a" stroke-width="3.3" stroke-linecap="round"/>
</svg>
<div class="t" style="left:32.5px;top:1047px;font-size:15px;color:#8a8a8a">Home</div>
<div class="t" style="left:118.5px;top:1047px;font-size:15px;color:#555">Refunds (Global)</div>

</body></html>
